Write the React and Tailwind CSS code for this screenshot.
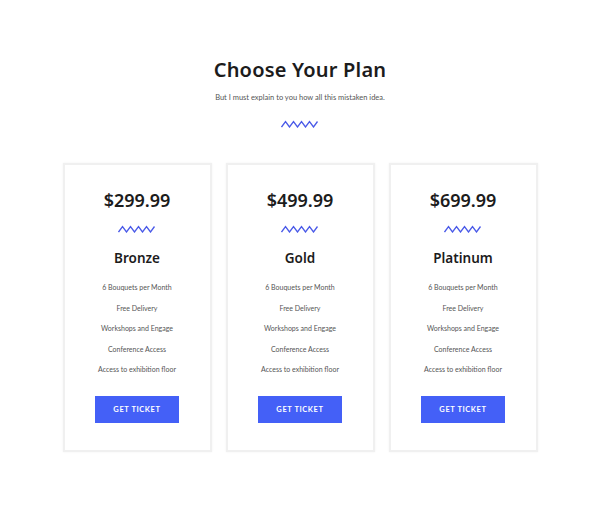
const plans = [
  { price: '$299.99', name: 'Bronze' },
  { price: '$499.99', name: 'Gold' },
  { price: '$699.99', name: 'Platinum' },
];

const features = [
  '6 Bouquets per Month',
  'Free Delivery',
  'Workshops and Engage',
  'Conference Access',
  'Access to exhibition floor',
];

function Wave({ className }) {
  return (
    <svg className={className} viewBox="0 0 38 8" fill="none" stroke="#4a5ae8" strokeWidth="1.3" strokeLinejoin="miter">
      <path d="M0.5 7 L4.5 1.5 L8.5 7 L12.5 1.5 L16.5 7 L20.5 1.5 L24.5 7 L28.5 1.5 L32.5 7 L36.5 1.5" />
    </svg>
  );
}

export default function App() {
  return (
    <div className="w-[600px] h-[516px] bg-white flex flex-col items-center font-['Lato',sans-serif]">
      <h1 className="mt-[57px] text-[20px] leading-[26px] font-semibold text-[#1c1c1c] font-['Noto_Sans',sans-serif] tracking-[0.2px]">
        Choose Your Plan
      </h1>
      <p className="mt-[10px] text-[7.5px] leading-[10px] text-[#555]">
        But I must explain to you how all this mistaken idea.
      </p>
      <Wave className="mt-[17px] w-[38px] h-[8px]" />

      <div className="mt-[35px] flex gap-[14px]">
        {plans.map((p) => (
          <div key={p.name} className="w-[149px] h-[289px] border-2 border-[#f0f0f0] shadow-[0_0_2px_rgba(0,0,0,0.06)] flex flex-col items-center">
            <div className="mt-[23px] text-[18px] leading-[24px] font-semibold text-[#1c1c1c] font-['Noto_Sans',sans-serif]">
              {p.price}
            </div>
            <Wave className="mt-[13px] w-[38px] h-[8px]" />
            <div className="mt-[16px] text-[13.5px] leading-[18px] font-semibold text-[#1c1c1c] font-['Noto_Sans',sans-serif]">
              {p.name}
            </div>
            <ul className="mt-[15px] flex flex-col items-center gap-[10.5px]">
              {features.map((f) => (
                <li key={f} className="text-[7px] leading-[10px] text-[#555]">{f}</li>
              ))}
            </ul>
            <button className="mt-[22px] w-[84px] h-[27px] bg-[#4460f7] text-white text-[7.5px] font-bold tracking-[0.6px]">
              GET TICKET
            </button>
          </div>
        ))}
      </div>
    </div>
  );
}
